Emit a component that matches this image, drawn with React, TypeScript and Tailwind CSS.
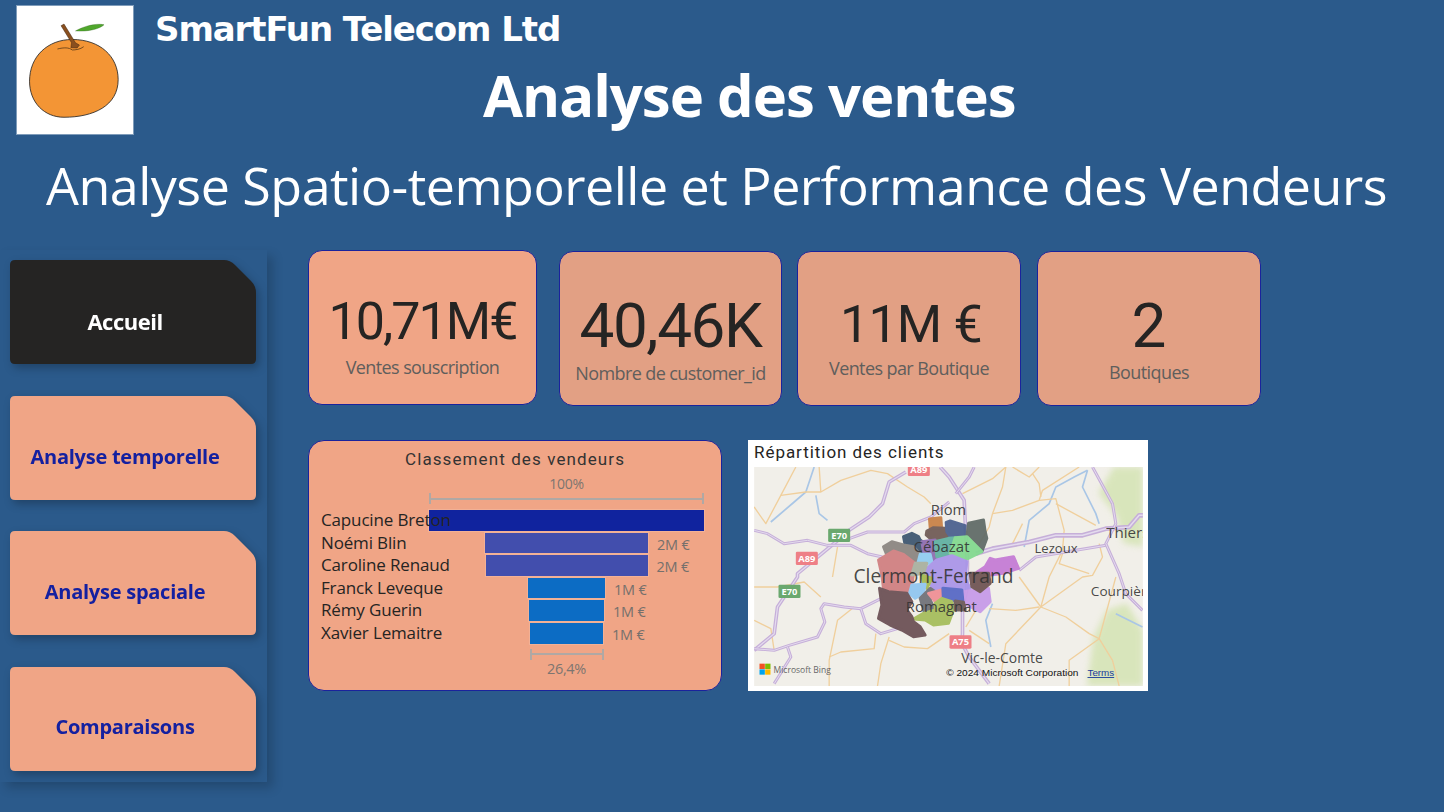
const SANS = "font-['Open_Sans','Noto_Sans',sans-serif]";

const purpleRoads: [string, number][] = [
  ["497,126 447,156 427,221 387,261 327,301 287,336 172,431 172,441 112,531 102,611 42,661", 11],
  ["42,301 82,311 132,341 202,331 262,346 332,346 382,371 427,381", 9],
  ["327,326 382,306 492,306 522,281 572,261 627,216", 9],
  ["422,506 362,536 312,531 252,521 242,536 254,576 232,621 147,646 102,661 42,656", 9],
  ["362,536 377,581 422,611 472,596", 9],
  ["142,651 152,681 102,761", 9],
  ["600,111 627,141 672,211 677,311 682,400 680,480 667,531 667,611 665,640 687,681 747,761", 11],
  ["702,111 687,141 647,191", 9],
  ["707,371 757,356 867,336 947,316 1027,316 1097,296 1167,291 1197,256 1208,256", 14],
  ["837,421 887,381 1007,361 1097,346", 9],
  ["1057,111 1117,221 1127,281 1097,341 1137,431 1157,491 1207,541", 9],
];

const yellowRoads = [
  "42,231 77,281 122,196 167,111",
  "122,196 197,186 242,186 302,151 392,121 442,131 502,171 552,201 572,221",
  "242,186 237,111",
  "292,351 277,441",
  "342,531 292,571 267,691 267,768",
  "267,681 302,666 402,656 407,611",
  "447,621 422,701 412,768",
  "447,631 492,651 562,656 627,611",
  "42,471 112,471 192,456 242,501",
  "42,571 92,596 102,661",
  "667,191 757,146 797,111",
  "757,251 787,171 797,111",
  "757,251 817,241 897,211 907,181 1017,111",
  "897,211 947,206 972,301 967,361 927,441 902,531",
  "947,221 1067,286",
  "817,111 867,141 897,111",
  "877,131 897,161 902,201",
  "757,251 747,291 717,341",
  "967,371 957,401 1047,431",
  "1077,341 1087,381 1057,436 1027,441 902,531",
  "847,281 817,341",
  "837,441 902,531",
  "747,536 827,541 897,531",
  "902,531 797,641 777,768",
  "902,531 977,561 1047,611 1077,626 987,691 987,768",
  "1077,626 1127,441",
  "1077,626 1117,691 1137,768",
  "687,601 747,641",
  "707,541 677,591",
];

const rivers = [
  "222,111 197,186 162,216 92,276",
  "227,196 237,251 262,271",
  "1042,121 1002,141 947,171 927,221 867,271 852,351",
  "1042,121 1027,171 1067,251 1077,281",
  "757,521 737,571 752,651",
  "1127,551 1207,591",
];

const regions: [string, string][] = [
  ["#c98146", "178,72 212,68 214,95 180,98"],
  ["#6f5a55", "170,108 190,98 225,100 240,125 235,135 185,135 168,120"],
  ["#4a5f8e", "228,82 240,78 285,92 283,122 240,125 230,110"],
  ["#5f6a66", "295,85 340,75 345,110 350,130 335,170 290,125"],
  ["#3d5670", "100,125 125,115 145,125 150,135 170,150 175,175 150,178 130,150 105,150"],
  ["#8a8580", "40,155 65,140 100,150 130,155 150,178 145,205 125,195 100,175 75,170 50,180"],
  ["#8d6cb0", "155,140 195,135 200,170 203,198 185,200 178,175 160,170"],
  ["#5fb0a0", "195,140 235,130 255,128 250,185 200,185"],
  ["#82d98e", "255,128 290,125 335,170 285,195 270,197 240,175"],
  ["#90cdf0", "150,178 180,178 185,200 165,210 143,205"],
  ["#a994e8", "170,220 200,195 245,182 290,200 285,250 300,280 280,290 220,280 190,290 180,260 165,240"],
  ["#d07f80", "25,195 70,168 100,178 135,205 125,270 115,295 70,295 40,280 35,240"],
  ["#a8b09f", "135,205 170,205 160,235 125,240"],
  ["#a4b94f", "155,240 185,250 170,280 160,265"],
  ["#c47ad5", "320,232 345,215 360,190 375,195 430,185 445,220 400,235 360,240 340,235"],
  ["#c79ae8", "280,290 355,280 360,320 330,350 290,330 280,315"],
  ["#6e5352", "300,235 355,235 360,265 330,290 305,275"],
  ["#90c6f0", "125,270 165,268 160,295 135,310 118,295"],
  ["#6f7178", "180,280 195,290 180,315 195,345 165,360 150,310"],
  ["#ef8f95", "175,295 215,285 220,315 195,320"],
  ["#5667c5", "218,280 275,285 278,318 220,315"],
  ["#a5bd5a", "195,325 215,310 245,320 250,345 235,385 190,390 165,375 130,372 160,355 195,345"],
  ["#6d5a58", "255,318 280,322 285,345 255,345"],
  ["#6b4f54", "28,280 55,290 110,295 125,320 110,345 125,365 130,380 150,395 165,420 130,425 95,405 60,390 25,370 35,330"],
];

const labels: [string, number, number, number, number][] = [
  ["Riom", 572, 255, 42, 106],
  ["Cébazat", 520, 367, 42, 168],
  ["Lezoux", 883, 368, 40, 129],
  ["Thiers", 1098, 323, 46, 130],
  ["Courpière", 1052, 497, 40, 190],
  ["Clermont-Ferrand", 340, 458, 60, 480],
  ["Romagnat", 497, 547, 44, 213],
  ["Vic-le-Comte", 663, 700, 42, 245],
];

const shields: [string, string, number, number][] = [
  ["A89", "#ee7f86", 503, 98],
  ["A89", "#ee7f86", 167, 365],
  ["A75", "#ee7f86", 628, 616],
  ["E70", "#6aa86e", 264, 296],
  ["E70", "#6aa86e", 115, 464],
];

function MapDrawing() {
  return (
    <svg viewBox="42 111 1166 657" className="block h-[219px] w-[389px]">
      <defs>
        <filter id="soft">
          <feGaussianBlur stdDeviation="10" />
        </filter>
      </defs>
      <rect x="42" y="111" width="1166" height="657" fill="#f1efe9" />
      <g filter="url(#soft)" fill="#d3e3b0" opacity="0.8">
        <polygon points="1075,190 1120,111 1208,111 1208,350 1150,340 1130,260" />
        <polygon points="1060,620 1100,540 1160,520 1208,600 1208,768 1040,768" />
      </g>
      {rivers.map((p) => (
        <polyline key={p} points={p} fill="none" stroke="#a9c6e6" strokeWidth="5" />
      ))}
      {yellowRoads.map((p) => (
        <polyline key={p} points={p} fill="none" stroke="#f0cf9c" strokeWidth="4" strokeLinejoin="round" />
      ))}
      {purpleRoads.map(([p, w]) => (
        <g key={p} fill="none" strokeLinejoin="round">
          <polyline points={p} stroke="#c6afd9" strokeWidth={w} />
          <polyline points={p} stroke="#e4dbee" strokeWidth={w / 3} />
        </g>
      ))}
      <g transform="translate(390 195)" opacity="0.93">
        {regions.map(([c, p]) => (
          <polygon key={p} points={p} fill={c} stroke={c} strokeWidth="9" strokeLinejoin="round" />
        ))}
      </g>
      {shields.map(([t, c, x, y]) => (
        <g key={t + x}>
          <rect x={x} y={y} width="66" height="40" rx="4" fill={c} />
          <text x={x + 33} y={y + 30} textAnchor="middle" fontSize="28" fontWeight="700" fill="#fff" fontFamily="'Open Sans', sans-serif">
            {t}
          </text>
        </g>
      ))}
      {labels.map(([t, x, y, s, w]) => (
        <text key={t} x={x} y={y} fontSize={s} textLength={w} lengthAdjust="spacingAndGlyphs" fill="#333" fillOpacity="0.9" fontFamily="'Open Sans', sans-serif">
          {t}
        </text>
      ))}
      <rect x="58" y="701" width="16" height="16" fill="#f25022" />
      <rect x="75" y="701" width="16" height="16" fill="#7fba00" />
      <rect x="58" y="718" width="16" height="16" fill="#00a4ef" />
      <rect x="75" y="718" width="16" height="16" fill="#ffb900" />
      <text x="100" y="728" fontSize="26" textLength="172" lengthAdjust="spacingAndGlyphs" fill="#666" fontFamily="'Open Sans', sans-serif">
        Microsoft Bing
      </text>
      <text x="618" y="738" fontSize="27" textLength="397" lengthAdjust="spacingAndGlyphs" fill="#111" fontFamily="'Liberation Sans', sans-serif">
        © 2024 Microsoft Corporation
      </text>
      <text x="1042" y="738" fontSize="27" textLength="80" lengthAdjust="spacingAndGlyphs" fill="#1a3a9c" textDecoration="underline" fontFamily="'Liberation Sans', sans-serif">
        Terms
      </text>
    </svg>
  );
}

function Logo() {
  return (
    <div className="ml-4 h-[130px] w-[118px] shrink-0 border border-[#7f9cba] bg-white">
      <svg viewBox="47 16 353 390" className="block h-full w-full">
        <path d="M85 245C85 170 140 118 215 118C300 118 355 170 355 240C355 320 280 355 190 355C130 355 85 310 85 245Z" fill="#f39535" stroke="#222" strokeWidth="2.5" />
        <path d="M170 147C190 142 205 142 215 150C225 150 240 148 250 140" fill="none" stroke="#5d3a17" strokeWidth="2.5" />
        <polygon points="181,76 190,71 225,128 237,135 230,144 211,143 213,128" fill="#8a4f1e" stroke="#3d2410" strokeWidth="1.5" />
        <path d="M225 92C250 78 285 68 312 73C300 85 265 95 225 92Z" fill="#4fa72c" stroke="#2d5e1c" strokeWidth="1" />
      </svg>
    </div>
  );
}

function NavButton({ label, active, tx, mt }: { label: string; active?: boolean; tx: string; mt: string }) {
  return (
    <div className={`${mt} drop-shadow-[3px_4px_4px_rgba(0,0,0,0.25)]`}>
      <div
        className={`flex h-[104px] w-[246px] items-center justify-center pr-[16px] [clip-path:path('M5_0L214_0Q220_0_225_5L241_21Q246_26_246_33L246_99Q246_104_241_104L5_104Q0_104_0_99L0_5Q0_0_5_0Z')] ${
          active ? "bg-[#252423] text-white" : "bg-[#f0a586] text-[#1420a0]"
        } ${tx}`}
      >
        <span className="leading-6 font-bold">{label}</span>
      </div>
    </div>
  );
}

function Kpi({ value, label, w, bg, size, valueClass, labelClass }: { value: string; label: string; w: string; bg: string; size: string; valueClass: string; labelClass: string }) {
  return (
    <div className={`flex h-[155px] flex-col items-center justify-start rounded-[14px] border border-[#1a239c] ${w} ${bg}`}>
      <div className={`font-['Roboto',sans-serif] leading-none font-normal text-[#252423] ${size} ${valueClass}`}>{value}</div>
      <div className={`text-[18px] leading-6 tracking-[-0.6px] text-[#605e5c] ${labelClass}`}>{label}</div>
    </div>
  );
}

const bars = [
  { name: "Capucine Breton", w: "w-[275px]", color: "bg-[#10239e]" },
  { name: "Noémi Blin", w: "w-[163px]", color: "bg-[#424ead]", value: "2M €" },
  { name: "Caroline Renaud", w: "w-[162px]", color: "bg-[#424ead]", value: "2M €" },
  { name: "Franck Leveque", w: "w-[77px]", color: "bg-[#0c6cc4]", value: "1M €" },
  { name: "Rémy Guerin", w: "w-[75px]", color: "bg-[#0c6cc4]", value: "1M €" },
  { name: "Xavier Lemaitre", w: "w-[73px]", color: "bg-[#0c6cc4]", value: "1M €" },
];

function Bracket({ w }: { w: string }) {
  return <div className={`mx-auto h-[11px] border-x-2 border-[#b0a8a4] bg-[linear-gradient(#b0a8a4,#b0a8a4)] bg-[length:100%_2px] bg-center bg-no-repeat ${w}`} />;
}

function Funnel() {
  return (
    <div className="h-[251px] w-[414px] rounded-[16px] border border-[#1a239c] bg-[#f0a586] pt-[7px]">
      <div className="text-center font-['Roboto',sans-serif] text-[17px] leading-[22px] tracking-[1.1px] text-[#333]">Classement des vendeurs</div>
      <div className="ml-[120px] w-[275px]">
        <div className="mt-[4px] text-center text-[14px] leading-[20px] tracking-[-0.3px] text-[#7d7570]">100%</div>
        <div className="mt-[-1px]"><Bracket w="w-[275px]" /></div>
      </div>
      <div className="relative mt-[6px] flex flex-col gap-[2px]">
        {bars.map((b) => (
          <div key={b.name} className="relative ml-[120px] flex h-[20.6px] w-[275px] justify-center">
            <div className={`relative h-full ${b.w} ${b.color} outline outline-1 outline-[#ffffff22]`}>
              {b.value && <span className="absolute top-[2px] left-full ml-[9px] text-[14.5px] leading-5 tracking-[-0.2px] whitespace-nowrap text-[#75706c]">{b.value}</span>}
            </div>
            <span className="absolute top-[-2px] left-[-108px] text-[17px] leading-6 tracking-[-0.15px] whitespace-nowrap text-[#252423]">{b.name}</span>
          </div>
        ))}
      </div>
      <div className="ml-[120px] w-[275px]">
        <div className="mt-[5px]"><Bracket w="w-[74px]" /></div>
        <div className="mt-[-1px] text-center text-[14.5px] leading-5 tracking-[-0.3px] text-[#7d7570]">26,4%</div>
      </div>
    </div>
  );
}

export default function App() {
  return (
    <div className={`flex h-[812px] w-[1444px] flex-col overflow-hidden bg-[#2b5a8b] text-white ${SANS}`}>
      <header className="h-[250px] shrink-0 pt-[5px]">
        <div className="flex h-[131px]">
          <Logo />
          <div className="ml-[21px]">
            <div className="font-['DejaVu_Sans',sans-serif] text-[34px] leading-[48px] font-bold tracking-[-1.1px] whitespace-nowrap">SmartFun Telecom Ltd</div>
            <h1 className="mt-[4px] ml-[328px] text-[58px] leading-[76px] font-bold tracking-[-1px] whitespace-nowrap">Analyse des ventes</h1>
          </div>
        </div>
        <h2 className="mt-[14px] ml-[46px] text-[52px] leading-[70px] tracking-[-0.5px] whitespace-nowrap">Analyse Spatio-temporelle et Performance des Vendeurs</h2>
      </header>
      <div className="flex items-start">
        <nav className="flex h-[532px] w-[267px] shrink-0 flex-col pt-[10px] pl-[10px] shadow-[6px_6px_10px_rgba(0,0,0,0.18)]">
          <NavButton label="Accueil" active tx="pt-[18px] text-[22px] tracking-[-0.5px]" mt="" />
          <NavButton label="Analyse temporelle" tx="pt-[18px] text-[20px] tracking-[-0.25px]" mt="mt-[32px]" />
          <NavButton label="Analyse spaciale" tx="pt-[18px] text-[20px] tracking-[-0.25px]" mt="mt-[31px]" />
          <NavButton label="Comparaisons" tx="pt-[16px] text-[20px] tracking-[-0.25px]" mt="mt-[32px]" />
        </nav>
        <main className="ml-[41px]">
          <div className="flex items-start">
            <Kpi value="10,71M€" label="Ventes souscription" w="w-[229px]" bg="bg-[#f0a586]" size="text-[52px] tracking-[-2px]" valueClass="mt-[45px]" labelClass="mt-[7px]" />
            <div className="mt-px ml-[22px]">
              <Kpi value="40,46K" label="Nombre de customer_id" w="w-[223px]" bg="bg-[#e2a084]" size="text-[62px] tracking-[-1.4px]" valueClass="mt-[43px]" labelClass="mt-[4px]" />
            </div>
            <div className="mt-px ml-[15px]">
              <Kpi value="11M €" label="Ventes par Boutique" w="w-[224px]" bg="bg-[#e2a084]" size="text-[52px] tracking-[-0.8px] pl-[4px]" valueClass="mt-[47px]" labelClass="mt-[5px]" />
            </div>
            <div className="mt-px ml-[16px]">
              <Kpi value="2" label="Boutiques" w="w-[224px]" bg="bg-[#e2a084]" size="text-[62px]" valueClass="mt-[43px]" labelClass="mt-[3px]" />
            </div>
          </div>
          <div className="mt-[34px] flex items-start gap-[26px]">
            <Funnel />
            <div className="h-[251px] w-[400px] bg-white px-[6px] text-[#252423]">
              <div className="h-[27px] font-['Roboto',sans-serif] text-[17px] leading-[24px] tracking-[0.95px] text-[#252423]">Répartition des clients</div>
              <MapDrawing />
            </div>
          </div>
        </main>
      </div>
    </div>
  );
}
